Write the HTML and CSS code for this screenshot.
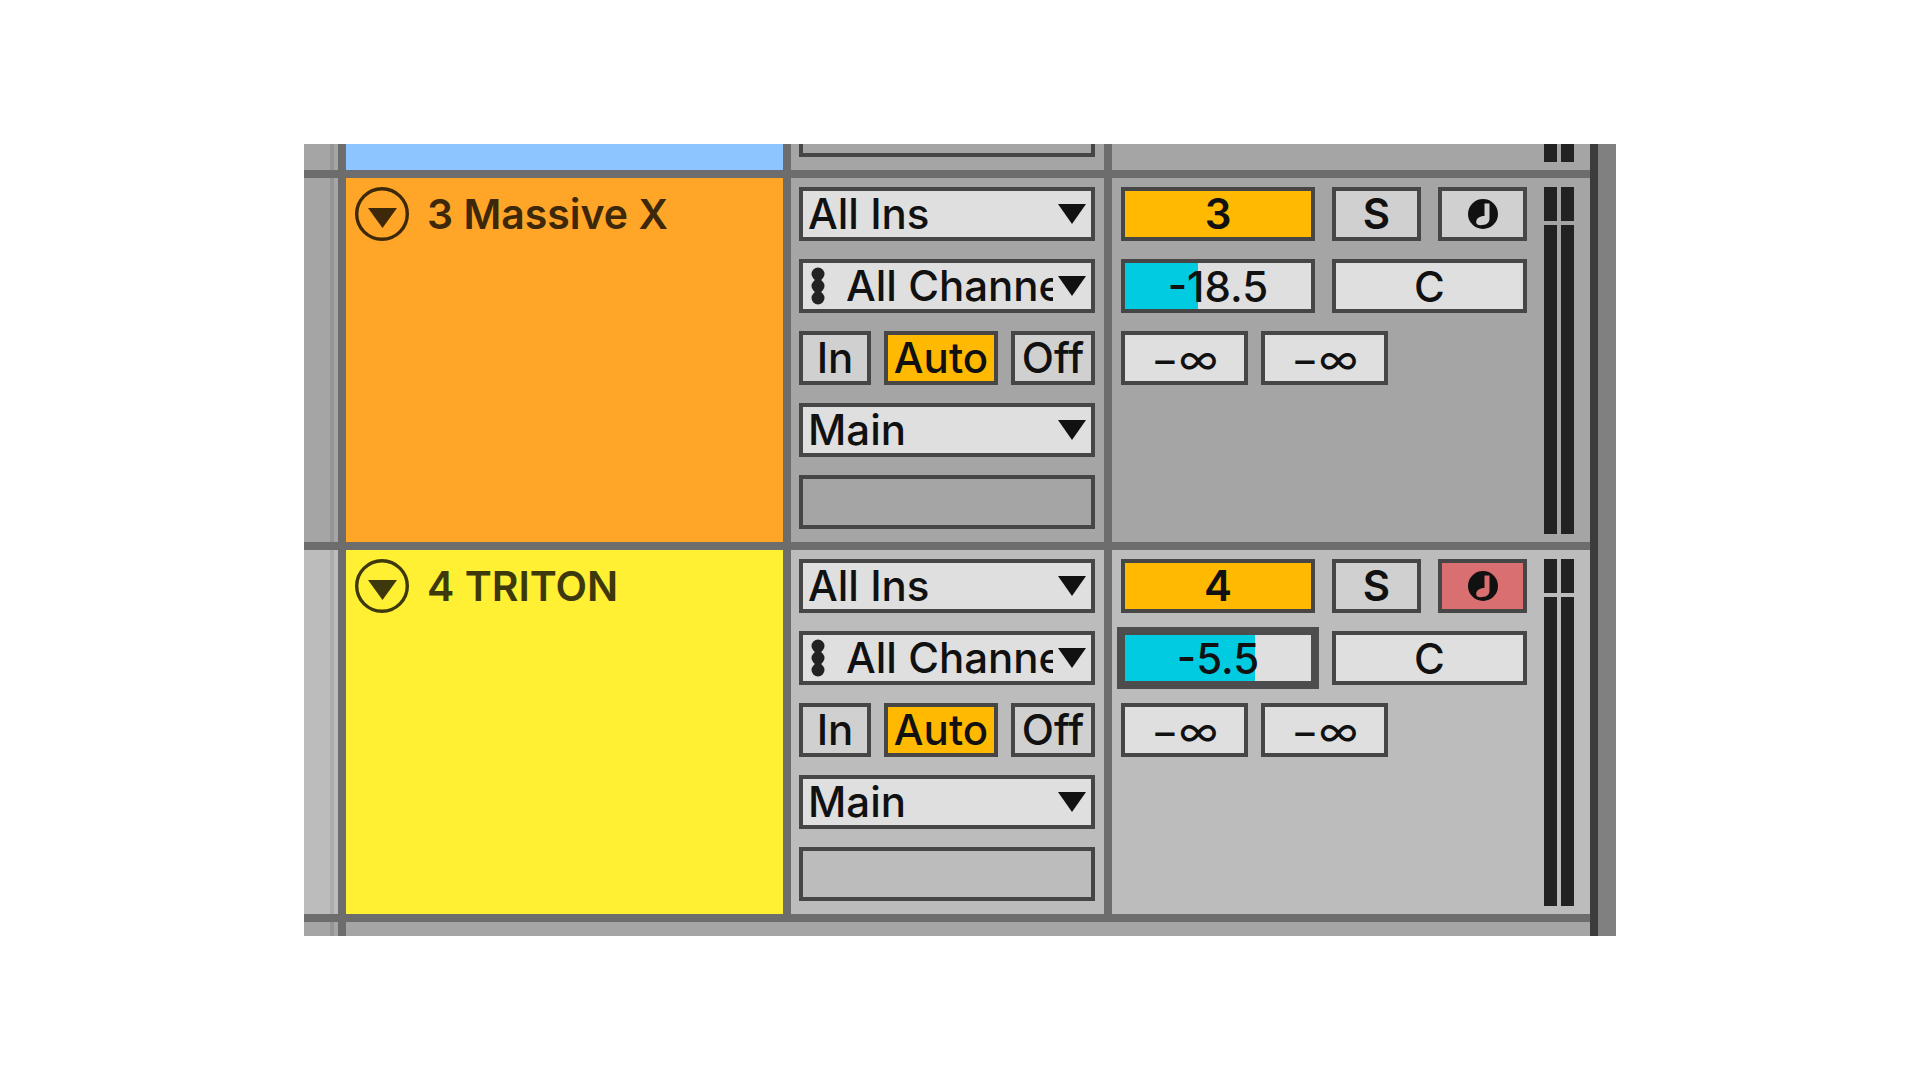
FILE: index.html
```html
<!DOCTYPE html>
<html lang="en">
<head>
<meta charset="utf-8">
<title>Arrangement tracks</title>
<link rel="stylesheet" href="styles.css">
</head>
<body>
<svg class="symbols" aria-hidden="true">
  <symbol id="arrow" viewBox="0 0 28 20"><path d="M0 0H28L14 20Z"/></symbol>
  <symbol id="fold" viewBox="0 0 54 54"><circle cx="27" cy="27" r="25.3" fill="none" stroke="currentColor" stroke-width="3.4"/><path d="M13 21H42L27.500 41Z"/></symbol>
  <symbol id="dots" viewBox="0 0 14 38"><circle cx="7" cy="7" r="6.500"/><circle cx="7" cy="19" r="6.500"/><circle cx="7" cy="31" r="6.500"/><path d="M3.500 7h7v24h-7z"/></symbol>
  <symbol id="note" viewBox="0 0 30 30"><path fill-rule="evenodd" d="M15 0a15 15 0 1 1 0 30a15 15 0 1 1 0-30ZM16.500 4.500V17C11.500 17 8.200 19.500 8.200 23C8.200 25.500 10 26.200 12.500 26.200C17.500 26.200 21.500 24.500 21.500 19.500V4.500Z"/></symbol>
</svg>
<main class="panel">
  <div class="tracks">
    <section class="track track-above" aria-label="Track 2">
      <div class="strip"></div>
      <div class="title blue"></div>
      <div class="routing"><div class="slot"></div></div>
      <div class="mixer"><div class="meter"><i></i><i></i></div></div>
    </section>

    <section class="track">
      <div class="strip"></div>
      <div class="title orange">
        <button class="fold" aria-label="Fold track 3"><svg><use href="#fold"/></svg></button>
        <h2>3 Massive X</h2>
      </div>
      <div class="routing">
        <div class="chooser"><select aria-label="Input type"><option>All Ins</option></select><svg class="arrow"><use href="#arrow"/></svg></div>
        <div class="chooser channel"><svg class="dots"><use href="#dots"/></svg><select aria-label="Input channel"><option>All Channels</option></select><svg class="arrow"><use href="#arrow"/></svg></div>
        <div class="monitor"><button>In</button><button class="on">Auto</button><button>Off</button></div>
        <div class="chooser"><select aria-label="Output type"><option>Main</option></select><svg class="arrow"><use href="#arrow"/></svg></div>
        <div class="slot"></div>
      </div>
      <div class="mixer">
        <div class="controls">
          <div class="line main"><button class="on strong">3</button><button class="strong" aria-label="Solo">S</button><button aria-label="Arm"><svg class="note"><use href="#note"/></svg></button></div>
          <div class="line levels"><input aria-label="Volume" value="-18.5" style="--level:39%"><input aria-label="Pan" value="C"></div>
          <div class="line sends"><input aria-label="Send A" value="−∞"><input aria-label="Send B" value="−∞"></div>
        </div>
        <div class="meter"><i></i><i></i><i></i><i></i></div>
      </div>
    </section>

    <section class="track selected">
      <div class="strip"></div>
      <div class="title yellow">
        <button class="fold" aria-label="Fold track 4"><svg><use href="#fold"/></svg></button>
        <h2>4 TRITON</h2>
      </div>
      <div class="routing">
        <div class="chooser"><select aria-label="Input type"><option>All Ins</option></select><svg class="arrow"><use href="#arrow"/></svg></div>
        <div class="chooser channel"><svg class="dots"><use href="#dots"/></svg><select aria-label="Input channel"><option>All Channels</option></select><svg class="arrow"><use href="#arrow"/></svg></div>
        <div class="monitor"><button>In</button><button class="on">Auto</button><button>Off</button></div>
        <div class="chooser"><select aria-label="Output type"><option>Main</option></select><svg class="arrow"><use href="#arrow"/></svg></div>
        <div class="slot"></div>
      </div>
      <div class="mixer">
        <div class="controls">
          <div class="line main"><button class="on strong">4</button><button class="strong" aria-label="Solo">S</button><button class="armed" aria-label="Arm"><svg class="note"><use href="#note"/></svg></button></div>
          <div class="line levels"><input class="active" aria-label="Volume" value="-5.5" style="--level:70%"><input aria-label="Pan" value="C"></div>
          <div class="line sends"><input aria-label="Send A" value="−∞"><input aria-label="Send B" value="−∞"></div>
        </div>
        <div class="meter"><i></i><i></i><i></i><i></i></div>
      </div>
    </section>

    <section class="track track-below" aria-label="Drop area">
      <div class="strip"></div>
      <div class="empty"></div>
    </section>
  </div>
  <div class="rail"></div>
</main>
</body>
</html>
```
FILE: styles.css
```css
* { box-sizing: border-box; }

body {
  margin: 0;
  padding: 144px 24px;
  background: #fff;
  color: #111;
  font: 500 42px/46px Inter, "Liberation Sans", sans-serif;
}

.symbols { display: none; }
svg { display: block; fill: currentColor; }

.panel {
  display: flex;
  max-width: 1312px;
  margin: 0 auto;
}

.tracks {
  --line: #6d6d6d;
  flex: 1;
  display: flex;
  flex-direction: column;
  gap: 8px;
  background: var(--line);
}

.rail {
  width: 26px;
  border-left: 8px solid #3c3c3c;
  background: #808080;
}

.track {
  --surface: #a5a5a5;
  --groove: #959595;
  display: grid;
  grid-template-columns: 34px 1fr 313px 478px;
  gap: 8px;
}
.selected { --surface: #bcbcbc; --groove: #acacac; }

.strip, .routing, .mixer, .empty { background: var(--surface); }

.strip { display: flex; justify-content: flex-end; }
.strip::after {
  content: "";
  width: 4px;
  margin-right: 4px;
  background: var(--groove);
}

.title {
  display: flex;
  align-items: flex-start;
  gap: 18px;
  padding: 9px;
}
.blue { background: #8cc5ff; }
.orange { background: #ffa629; color: #3d280a; }
.yellow { background: #fff034; color: #3d390c; }

h2 {
  margin: 0;
  font-size: 41px;
  font-weight: 600;
  line-height: 54px;
  white-space: nowrap;
}

button, select, input {
  width: 100%;
  min-width: 0;
  height: 54px;
  margin: 0;
  padding: 0;
  border: 4px solid #464646;
  border-radius: 0;
  background: #dfdfdf;
  color: inherit;
  font: inherit;
  text-align: center;
  outline: 0;
}
button {
  display: flex;
  align-items: center;
  justify-content: center;
  background: #d0d0d0;
}
.on { background: #ffb900; }
.armed { background: #d96f70; }
.strong { font-weight: 600; }

.fold {
  flex: none;
  width: 54px;
  border: 0;
  background: none;
}
.fold svg { width: 54px; height: 54px; }

.routing {
  display: flex;
  flex-direction: column;
  gap: 18px;
  padding: 9px 9px 13px 8px;
}

.slot { height: 54px; border: 4px solid #464646; }

.chooser { display: grid; align-items: center; }
.chooser > * { grid-area: 1 / 1; }
.chooser select {
  appearance: none;
  padding: 0 38px 0 5px;
  text-align: left;
}
.channel select { padding-left: 43px; }
.arrow, .dots { z-index: 1; pointer-events: none; }
.arrow {
  justify-self: end;
  width: 28px;
  height: 20px;
  margin-right: 9px;
}
.dots {
  width: 14px;
  height: 38px;
  margin-left: 12px;
  color: #222;
}

.monitor {
  display: grid;
  grid-template-columns: 72px 114px 1fr;
  gap: 13px;
}

.mixer {
  display: flex;
  justify-content: space-between;
  padding: 9px 16px 8px 9px;
}
.controls {
  display: flex;
  flex-direction: column;
  gap: 18px;
  width: 406px;
}
.line { display: grid; }
.main { grid-template-columns: 194px 1fr 1fr; gap: 17px; }
.levels { grid-template-columns: 194px 1fr; gap: 17px; }
.sends { grid-template-columns: 127px 127px; gap: 13px; }
.sends input { font-weight: 400; }

.levels input {
  background: linear-gradient(to right, #00cbe0 var(--level, 0%), #dfdfdf var(--level, 0%));
}
.levels .active {
  border-color: #4d4d4d;
  box-shadow: 0 0 0 4px #4d4d4d;
}

.note { width: 30px; height: 30px; }

.meter {
  display: grid;
  grid-template-columns: 13px 13px;
  grid-template-rows: 34px 1fr;
  gap: 4px;
}
.meter i { background: #222; }

.track-above {
  height: 26px;
  overflow: hidden;
}
.track-above .routing { justify-content: flex-end; padding-top: 0; }
.track-above .slot { height: 13px; border-top: 0; }
.track-above .mixer { justify-content: flex-end; padding-top: 0; }
.track-above .meter { grid-template-rows: 1fr; }

.track-below {
  grid-template-columns: 34px 1fr;
  height: 14px;
}
```
